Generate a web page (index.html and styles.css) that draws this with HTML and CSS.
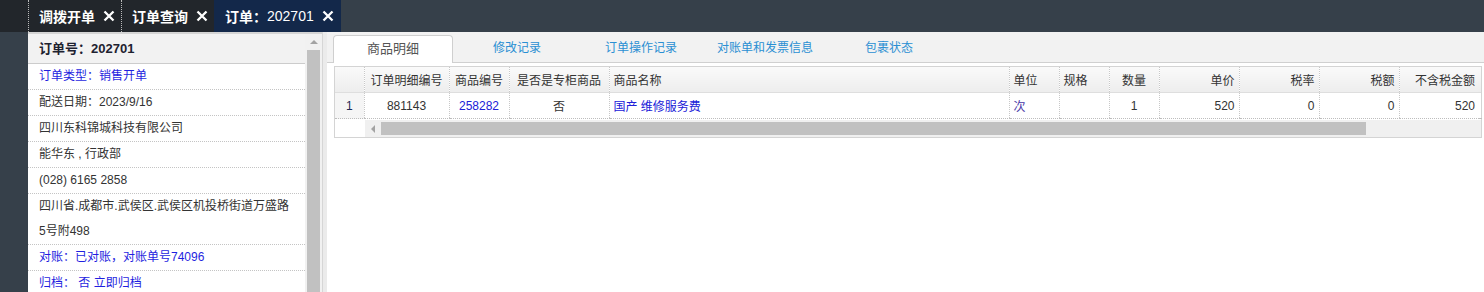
FILE: index.html
```html
<!DOCTYPE html>
<html lang="zh-CN">
<head>
    <meta charset="UTF-8">
    <title>订单：202701</title>
    <link rel="stylesheet" href="styles.css">
</head>
<body>

    <div class="topbar">
        <ul class="page-tabs">
            <li>调拨开单
                <svg class="close" viewBox="0 0 12 12" width="12" height="12"><path d="M1.5 1.5L10.5 10.5M10.5 1.5L1.5 10.5"/></svg>
            </li>
            <li>订单查询
                <svg class="close" viewBox="0 0 12 12" width="12" height="12"><path d="M1.5 1.5L10.5 10.5M10.5 1.5L1.5 10.5"/></svg>
            </li>
            <li class="active">订单：<span class="tab-no">202701</span>
                <svg class="close" viewBox="0 0 12 12" width="12" height="12"><path d="M1.5 1.5L10.5 10.5M10.5 1.5L1.5 10.5"/></svg>
            </li>
        </ul>
    </div>

    <div class="main">
        <div class="side"></div>

        <div class="order-panel">
            <div class="order-info">
                <div class="order-title">订单号：202701</div>
                <div class="row link">订单类型：销售开单</div>
                <div class="row">配送日期：2023/9/16</div>
                <div class="row">四川东科锦城科技有限公司</div>
                <div class="row">能华东 , 行政部</div>
                <div class="row">(028) 6165 2858</div>
                <div class="row">四川省.成都市.武侯区.武侯区机投桥街道万盛路5号附498</div>
                <div class="row link">对账：已对账，对账单号74096</div>
                <div class="row link">归档： 否 立即归档</div>
            </div>
            <div class="vscroll">
                <div class="arrow-up"></div>
                <div class="thumb"></div>
            </div>
        </div>

        <div class="splitter"></div>

        <div class="content">
            <ul class="detail-tabs">
                <li class="active">商品明细</li>
                <li>修改记录</li>
                <li>订单操作记录</li>
                <li>对账单和发票信息</li>
                <li>包裹状态</li>
            </ul>

            <div class="grid">
                <table>
                    <colgroup>
                        <col style="width: 29px">
                        <col style="width: 85px">
                        <col style="width: 60px">
                        <col style="width: 100px">
                        <col style="width: 400px">
                        <col style="width: 50px">
                        <col style="width: 50px">
                        <col style="width: 50px">
                        <col style="width: 80px">
                        <col style="width: 80px">
                        <col style="width: 80px">
                        <col style="width: 80px">
                        <col>
                    </colgroup>
                    <thead>
                        <tr>
                            <th></th>
                            <th>订单明细编号</th>
                            <th>商品编号</th>
                            <th>是否是专柜商品</th>
                            <th class="left">商品名称</th>
                            <th class="left">单位</th>
                            <th class="left">规格</th>
                            <th>数量</th>
                            <th class="right">单价</th>
                            <th class="right">税率</th>
                            <th class="right">税额</th>
                            <th class="right">不含税金额</th>
                            <th class="filler"></th>
                        </tr>
                    </thead>
                    <tbody>
                        <tr>
                            <td class="num">1</td>
                            <td>881143</td>
                            <td class="blue">258282</td>
                            <td>否</td>
                            <td class="left blue">国产 维修服务费</td>
                            <td class="left unit">次</td>
                            <td></td>
                            <td>1</td>
                            <td class="right">520</td>
                            <td class="right">0</td>
                            <td class="right">0</td>
                            <td class="right">520</td>
                            <td class="filler"></td>
                        </tr>
                    </tbody>
                </table>
                <div class="hscroll">
                    <div class="hscroll-spacer"></div>
                    <div class="arrow-left"></div>
                    <div class="hthumb"></div>
                </div>
            </div>
        </div>
    </div>

</body>
</html>
```

FILE: styles.css
```css
body {
    margin: 0;
    height: 292px;
    overflow: hidden;
    background: #36404a;
    font-family: "Liberation Sans", Arial, "Noto Sans CJK SC", sans-serif;
    font-size: 12px;
    color: #333;
}
ul {
    list-style: none;
    margin: 0;
    padding: 0;
}

/* top page tabs */
.topbar {
    height: 32px;
    display: flex;
}
.page-tabs {
    display: flex;
    background: #22262b;
    padding-left: 28px;
}
.page-tabs li {
    display: flex;
    align-items: center;
    gap: 8px;
    padding: 0 6px 0 10px;
    border-left: 1px dotted #bbb;
    color: #fff;
    font-size: 14px;
    font-weight: bold;
    white-space: nowrap;
}
.page-tabs li.active {
    background: #13284a;
    border-left: 1px solid #13284a;
    padding-right: 7px;
    gap: 0;
}
.page-tabs .tab-no {
    font-weight: normal;
    margin-right: 8px;
}
.page-tabs .close {
    fill: none;
    stroke: #fff;
    stroke-width: 2.3;
}

.main {
    display: flex;
    height: 260px;
}
.side {
    width: 28px;
}

/* left order panel */
.order-panel {
    width: 294px;
    display: flex;
    background: #fff;
    border-top: 2px solid #d4d4d4;
}
.order-info {
    width: 277px;
}
.order-title {
    height: 29px;
    line-height: 29px;
    padding-left: 11px;
    background: #f2f2f2;
    border-bottom: 1px solid #ccc;
    font-size: 13px;
    font-weight: bold;
    color: #1e2230;
}
.row {
    line-height: 25px;
    padding-left: 11px;
    padding-right: 14px;
    border-bottom: 1px dotted #c4c4c4;
}
.link {
    color: #1f1fe0;
}
.vscroll {
    width: 17px;
    background: #f1f1f1;
    display: flex;
    flex-direction: column;
    align-items: center;
}
.arrow-up {
    margin-top: 6px;
    width: 0;
    height: 0;
    border-left: 4px solid transparent;
    border-right: 4px solid transparent;
    border-bottom: 4px solid #a3a3a3;
}
.thumb {
    margin-top: 6px;
    width: 13px;
    flex: 1;
    background: #c1c1c1;
}

.splitter {
    width: 4px;
    background: #ebebeb;
    border-left: 1px solid #d6d6d6;
}
.content {
    flex: 1;
    background: #fff;
}

/* detail tabs */
.detail-tabs {
    display: flex;
    gap: 4px;
    height: 30px;
    padding: 0 0 0 6px;
    background: #f2f2f2;
    border-bottom: 1px solid #d0d0d0;
    align-items: flex-end;
}
.detail-tabs li {
    width: 120px;
    height: 27px;
    line-height: 26px;
    text-align: center;
    color: #2a8fd3;
}
.detail-tabs li.active {
    background: #fff;
    border: 1px solid #cfcfcf;
    border-bottom: none;
    border-radius: 4px 4px 0 0;
    height: 27px;
    margin-bottom: -1px;
    color: #555;
    font-size: 13px;
    width: 118px;
}

/* grid */
.grid {
    margin: 3px 2px 0 7px;
    border: 1px solid #d4d4d4;
}
table {
    width: 100%;
    border-collapse: collapse;
    table-layout: fixed;
}
th {
    height: 25px;
    padding: 0 4px;
    font-weight: normal;
    color: #333;
    background: linear-gradient(#fafafa, #ededed);
    border-bottom: 1px solid #dedede;
    border-left: 1px dotted #c8c8c8;
    white-space: nowrap;
    overflow: hidden;
}
th:first-child {
    border-left: none;
}
td {
    height: 25px;
    padding: 0 4px;
    text-align: center;
    color: #333;
    border-bottom: 1px dotted #bdbdbd;
    border-left: 1px dotted #c8c8c8;
    white-space: nowrap;
}
td:first-child {
    border-left: none;
}
td.num {
    background: #f5f5f5;
    color: #1e2a55;
}
.left {
    text-align: left;
}
.right {
    text-align: right;
}
td.blue {
    color: #2020d8;
}
td.unit {
    color: #4b3aa8;
}
th.filler,
td.filler {
    border-left: none;
}
.hscroll {
    display: flex;
    align-items: center;
    height: 17px;
    margin-top: 1px;
    background: #f0f0f0;
}
.hscroll-spacer {
    width: 30px;
    height: 17px;
    background: #fff;
}
.arrow-left {
    width: 0;
    height: 0;
    margin: 0 6px 0 6px;
    border-top: 4px solid transparent;
    border-bottom: 4px solid transparent;
    border-right: 4px solid #a3a3a3;
}
.hthumb {
    width: 985px;
    height: 13px;
    background: #c1c1c1;
}
```
